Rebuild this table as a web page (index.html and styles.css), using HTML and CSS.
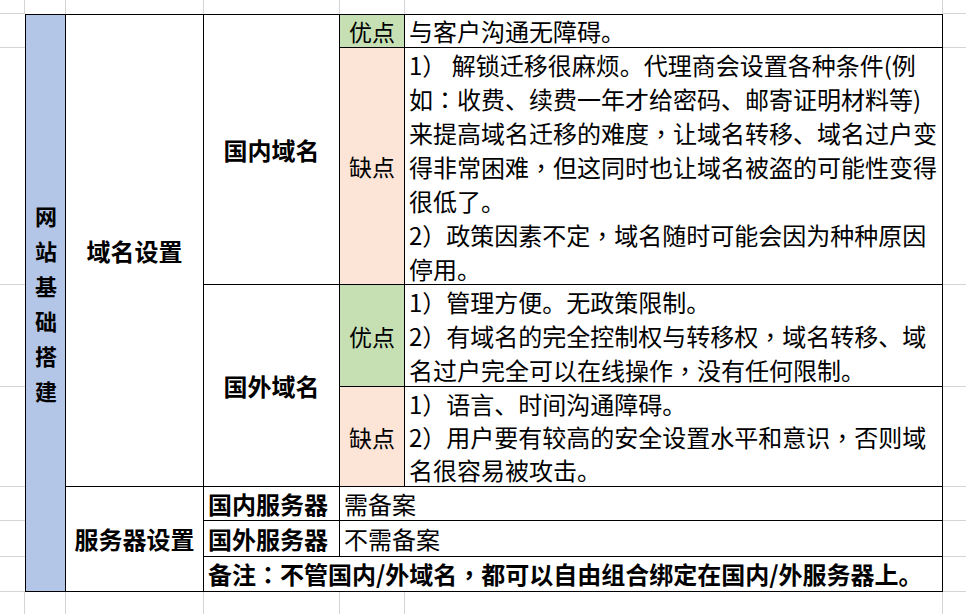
FILE: index.html
```html
<!DOCTYPE html>
<html lang="zh-CN">
<head>
<meta charset="utf-8">
<title>网站基础搭建</title>
<link rel="stylesheet" href="styles.css">
</head>
<body>
<div class="sheet">
  <!-- gridlines around the table -->
  <div class="g gr r1 c1"></div>
  <div class="g gr r1 c2"></div>
  <div class="g gr r1 c3"></div>
  <div class="g gr r1 c4"></div>
  <div class="g gr r1 c5"></div>
  <div class="g gr r1 c6"></div>
  <div class="g gb r1 c1"></div>
  <div class="g gb r1 c7"></div>

  <div class="g gb r2 c1"></div>
  <div class="g gb r3 c1"></div>
  <div class="g gb r4 c1"></div>
  <div class="g gb r5 c1"></div>
  <div class="g gb r6 c1"></div>
  <div class="g gb r7 c1"></div>
  <div class="g gb r8 c1"></div>

  <div class="g gb r2 c7"></div>
  <div class="g gb r3 c7"></div>
  <div class="g gb r4 c7"></div>
  <div class="g gb r5 c7"></div>
  <div class="g gb r6 c7"></div>
  <div class="g gb r7 c7"></div>
  <div class="g gb r8 c7"></div>

  <div class="g gr r9 c1"></div>
  <div class="g gr r9 c2"></div>
  <div class="g gr r9 c3"></div>
  <div class="g gr r9 c4"></div>
  <div class="g gr r9 c5"></div>
  <div class="g gr r9 c6"></div>

  <!-- table cells -->
  <div class="cell blue title"><span class="vert">网站基础搭建</span></div>
  <div class="cell bold center domain"><div>域名设置</div></div>
  <div class="cell bold center cn-domain"><div>国内域名</div></div>
  <div class="cell green center cn-pro-tag"><div>优点</div></div>
  <div class="cell text cn-pro"><div>与客户沟通无障碍。</div></div>
  <div class="cell pink center cn-con-tag"><div>缺点</div></div>
  <div class="cell text cn-con"><div>1）&nbsp;解锁迁移很麻烦。代理商会设置各种条件(例<br>如<span class="p" lang="zh-TW">：</span>收费、续费一年才给密码、邮寄证明材料等)<br>来提高域名迁移的难度<span class="p" lang="zh-TW">，</span>让域名转移、域名过户变<br>得非常困难<span class="p" lang="zh-TW">，</span>但这同时也让域名被盗的可能性变得<br>很低了。<br>2）政策因素不定<span class="p" lang="zh-TW">，</span>域名随时可能会因为种种原因<br>停用。</div></div>
  <div class="cell bold center fx-domain"><div>国外域名</div></div>
  <div class="cell green center fx-pro-tag"><div>优点</div></div>
  <div class="cell text fx-pro"><div>1）管理方便。无政策限制。<br>2）有域名的完全控制权与转移权<span class="p" lang="zh-TW">，</span>域名转移、域<br>名过户完全可以在线操作<span class="p" lang="zh-TW">，</span>没有任何限制。</div></div>
  <div class="cell pink center fx-con-tag"><div>缺点</div></div>
  <div class="cell text fx-con"><div>1）语言、时间沟通障碍。<br>2）用户要有较高的安全设置水平和意识<span class="p" lang="zh-TW">，</span>否则域<br>名很容易被攻击。</div></div>
  <div class="cell bold center server"><div>服务器设置</div></div>
  <div class="cell bold text cn-server"><div>国内服务器</div></div>
  <div class="cell text cn-server-v"><div>需备案</div></div>
  <div class="cell bold text fx-server"><div>国外服务器</div></div>
  <div class="cell text fx-server-v"><div>不需备案</div></div>
  <div class="cell bold text note"><div>备注<span class="p" lang="zh-TW">：</span>不管国内/外域名<span class="p" lang="zh-TW">，</span>都可以自由组合绑定在国内/外服务器上。</div></div>
</div>
</body>
</html>
```
FILE: styles.css
```css
html, body {
  margin: 0;
  padding: 0;
  background: #ffffff;
}

.sheet {
  width: 966px;
  height: 614px;
  overflow: hidden;
  display: grid;
  grid-template-columns: 25px 41px 138px 136px 65px 538px 23px;
  grid-template-rows: 14px 34px 237px 102px 100px 34px 36px 35px 22px;
  font-family: "Noto Sans CJK SC", "Microsoft YaHei", sans-serif;
  font-size: 24px;
  color: #000;
}

.g { box-sizing: border-box; }
.gr { border-right: 1px solid #d4d4d4; }
.gb { border-bottom: 1px solid #d4d4d4; }

.r1 { grid-row: 1; }
.r2 { grid-row: 2; }
.r3 { grid-row: 3; }
.r4 { grid-row: 4; }
.r5 { grid-row: 5; }
.r6 { grid-row: 6; }
.r7 { grid-row: 7; }
.r8 { grid-row: 8; }
.r9 { grid-row: 9; }
.c1 { grid-column: 1; }
.c2 { grid-column: 2; }
.c3 { grid-column: 3; }
.c4 { grid-column: 4; }
.c5 { grid-column: 5; }
.c6 { grid-column: 6; }
.c7 { grid-column: 7; }

.cell {
  box-sizing: border-box;
  border-right: 1px solid #000;
  border-bottom: 1px solid #000;
  display: flex;
  flex-direction: column;
  justify-content: center;
  white-space: nowrap;
  overflow: hidden;
  line-height: 34px;
}

.p { font-family: "Noto Sans CJK TC", "Noto Sans CJK SC", sans-serif; }

.center { align-items: center; text-align: center; }
.text { align-items: flex-start; padding-left: 4px; }
.bold { font-weight: 700; font-size: 24px; }

.blue { background: #b4c6e7; }
.green { background: #c6e0b4; }
.pink { background: #fce4d6; }

.green.center, .pink.center { font-size: 23px; }

.title {
  grid-column: 2; grid-row: 2 / 9;
  border-left: 1px solid #000;
  border-top: 1px solid #000;
  align-items: center;
}
.vert {
  display: block;
  width: 24px;
  white-space: normal;
  font-weight: 700;
  font-size: 22px;
  line-height: 35px;
  text-align: center;
  margin-left: 1px;
}

.domain { grid-column: 3; grid-row: 2 / 6; border-top: 1px solid #000; }
.cn-domain { grid-column: 4; grid-row: 2 / 4; border-top: 1px solid #000; }
.cn-pro-tag { grid-column: 5; grid-row: 2; border-top: 1px solid #000; }
.cn-pro { grid-column: 6; grid-row: 2; border-top: 1px solid #000; }
.cn-con-tag { grid-column: 5; grid-row: 3; }
.cn-con { grid-column: 6; grid-row: 3; padding-top: 2px; }
.fx-domain { grid-column: 4; grid-row: 4 / 6; }
.fx-pro-tag { grid-column: 5; grid-row: 4; }
.fx-pro { grid-column: 6; grid-row: 4; }
.fx-con-tag { grid-column: 5; grid-row: 5; }
.fx-con { grid-column: 6; grid-row: 5; line-height: 33px; }
.server { grid-column: 3; grid-row: 6 / 9; }
.cn-server { grid-column: 4; grid-row: 6; }
.cn-server-v { grid-column: 5 / 7; grid-row: 6; }
.fx-server { grid-column: 4; grid-row: 7; }
.fx-server-v { grid-column: 5 / 7; grid-row: 7; }
.note { grid-column: 4 / 7; grid-row: 8; }
```
